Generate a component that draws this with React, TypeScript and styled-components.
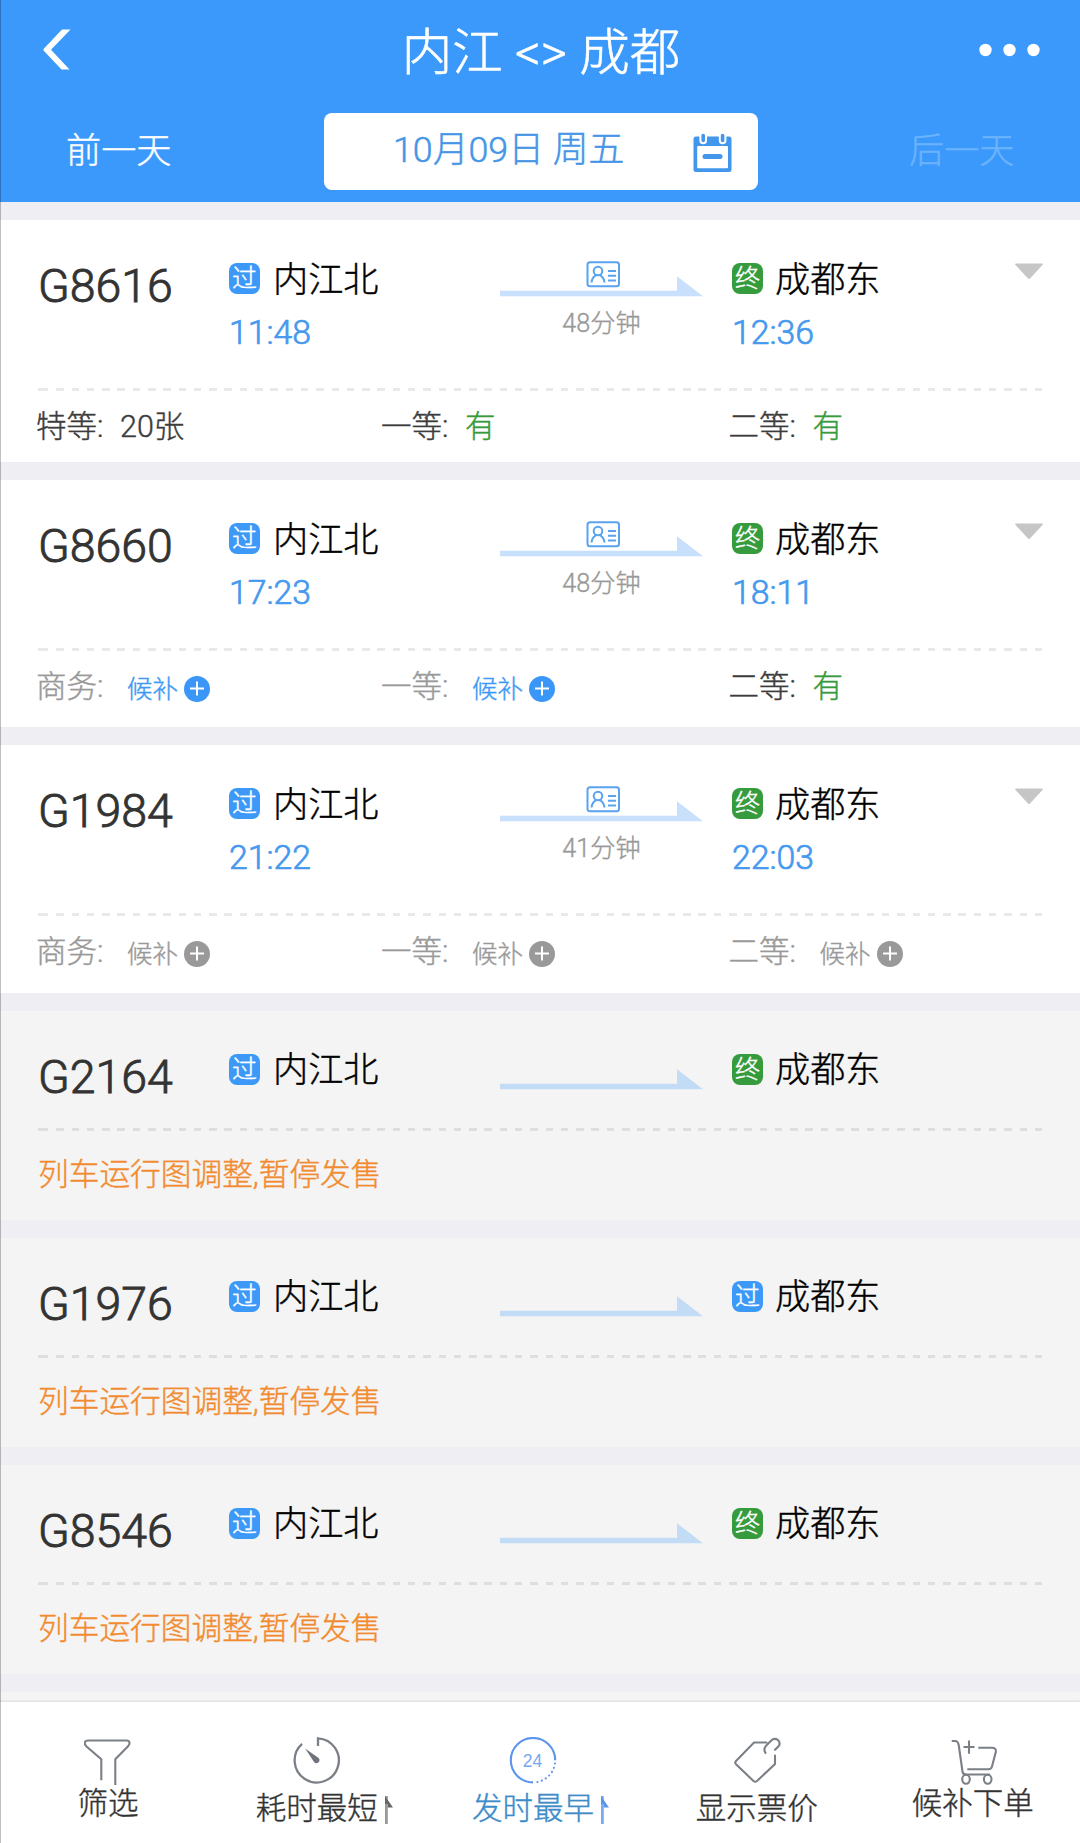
import React from "react";
import styled, { createGlobalStyle } from "styled-components";

const BLUE = "#3b99fc";
const GREEN = "#369b3d";

const GlobalStyle = createGlobalStyle`
  * { box-sizing: border-box; }
  body {
    margin: 0;
    background: #efeef3;
    font-family: Roboto, "Noto Sans CJK SC", sans-serif;
    font-weight: 300;
    -webkit-text-stroke-width: 0.4px;
  }
  svg { display: block; flex: none; }
`;

const Screen = styled.div`
  position: relative;
  display: flex;
  flex-direction: column;
  width: 1080px;
  height: 1843px;
  overflow: hidden;
  &::after {
    content: "";
    position: absolute;
    inset: 0 auto 0 0;
    width: 1px;
    background: rgba(0, 0, 0, 0.25);
  }
`;

/* ---------- header ---------- */

const Header = styled.header`
  flex: none;
  height: 201.5px;
  background: ${BLUE};
  color: #fff;
`;

const TitleRow = styled.div`
  display: grid;
  grid-template-columns: 200px 1fr 200px;
  height: 106px;
  padding: 0 40px 0 42px;
`;

const IconSlot = styled.div<{ $end?: boolean }>`
  display: flex;
  align-items: center;
  justify-content: ${(p) => (p.$end ? "flex-end" : "flex-start")};
  padding-bottom: 7px;
`;

const Title = styled.h1`
  margin: 0;
  font-size: 50.5px;
  font-weight: 300;
  line-height: 106px;
  text-align: center;
  white-space: nowrap;
  -webkit-text-stroke-width: 0.6px;
`;

const DateRow = styled.div`
  display: grid;
  grid-template-columns: 324px 434px 1fr;
  height: 90px;
  padding-top: 7px;
`;

const DayLink = styled.button<{ $next?: boolean }>`
  border: 0;
  padding: ${(p) => (p.$next ? "0 0 0 151px" : "0 0 0 66px")};
  background: none;
  color: ${(p) => (p.$next ? "#6cb3fd" : "#fff")};
  font: inherit;
  font-size: 35.2px;
  line-height: 77px;
  height: 77px;
  text-align: left;
`;

const DateBox = styled.div`
  display: flex;
  align-items: center;
  height: 77px;
  padding: 0 26px 0 69px;
  border-radius: 8px;
  background: #fff;
`;

const DateText = styled.span`
  flex: 1;
  color: #4695e6;
  font-size: 35.8px;
  line-height: 77px;
  padding-bottom: 2px;
  white-space: nowrap;
  -webkit-text-stroke-width: 0.5px;
`;

const CalendarSlot = styled.div`
  padding-top: 2px;
`;

/* ---------- train list ---------- */

const List = styled.main`
  display: flex;
  flex: 1;
  flex-direction: column;
  gap: 18px;
  min-height: 0;
  padding-top: 18.5px;
  overflow: hidden;
`;

const Card = styled.article<{ $off?: boolean; $h: number }>`
  flex: none;
  height: ${(p) => p.$h}px;
  background: ${(p) => (p.$off ? "#f4f4f4" : "#fff")};
`;

const Info = styled.div<{ $off?: boolean }>`
  display: grid;
  grid-template-columns: 191px 271px 232px 283px 28px;
  align-items: start;
  height: ${(p) => (p.$off ? 117 : 168)}px;
  padding: 43px 0 0 38px;
`;

const TrainNo = styled.div`
  font-size: 46.4px;
  line-height: 46px;
  color: #333;
  -webkit-text-stroke-width: 0.9px;
`;

const Station = styled.div<{ $end?: boolean }>`
  display: flex;
  align-items: center;
  height: 31px;
  gap: ${(p) => (p.$end ? 12 : 13)}px;
  font-size: 35.2px;
  line-height: 35px;
  color: #000;
  white-space: nowrap;
`;

const StationName = styled.span`
  padding-top: 3px;
`;

const Badge = styled.span<{ $end?: boolean }>`
  width: 31px;
  height: 31px;
  border-radius: 8px;
  background: ${(p) => (p.$end ? GREEN : "#3d99f8")};
  color: #fff;
  font-size: 25px;
  line-height: 31px;
  text-align: center;
`;

const Time = styled.div`
  margin-top: 19px;
  color: #4599ee;
  font-size: 33.8px;
  line-height: 40px;
  -webkit-text-stroke-width: 0.7px;
`;

const Route = styled.div<{ $off?: boolean }>`
  width: 203px;
  margin-top: ${(p) => (p.$off ? 0 : -2)}px;
`;

const Duration = styled.div`
  margin-top: 10px;
  color: #999;
  font-size: 25.2px;
  line-height: 34px;
  text-align: center;
`;

const Divider = styled.div<{ $off?: boolean }>`
  --dash: ${(p) => (p.$off ? "#dedede" : "#e9e9e9")};
  display: flex;
  height: 3px;
  margin: 0 37px 0 38px;
  &::before {
    content: "";
    width: 3.2px;
    background: var(--dash);
  }
  &::after {
    content: "";
    flex: 1;
    background: repeating-linear-gradient(90deg, var(--dash) 0 7.5px, transparent 7.5px 15.29px);
  }
`;

const Seats = styled.div`
  display: grid;
  grid-template-columns: 345px 347.5px 1fr;
  padding: 18px 0 0 36px;
  font-size: 30.5px;
  line-height: 36px;
`;

const Seat = styled.div<{ $dim?: boolean }>`
  display: flex;
  align-items: center;
  height: 36px;
  color: ${(p) => (p.$dim ? "#999" : "#3c3c3c")};
  white-space: nowrap;
`;

const SeatLabel = styled.span`
  width: 84px;
`;

const Available = styled.span`
  color: ${GREEN};
`;

const Waitlist = styled.span<{ $on?: boolean }>`
  display: flex;
  align-items: center;
  gap: 6px;
  padding: 4px 0 0 7px;
  color: ${(p) => (p.$on ? "#3c99f5" : "#999")};
  font-size: 25.5px;
  line-height: 32px;
`;

const Notice = styled.p`
  margin: 0;
  padding: 26px 0 0 38px;
  color: #f28b2f;
  font-size: 30.7px;
  line-height: 36px;
`;

/* ---------- bottom bar ---------- */

const TabBar = styled.nav`
  display: grid;
  grid-template-columns: repeat(5, 216.2px);
  flex: none;
  height: 141.5px;
  padding-top: 35px;
  background: #fff;
  box-shadow: 0 -1px 2px rgba(0, 0, 0, 0.1);
`;

const Tab = styled.div<{ $active?: boolean }>`
  display: flex;
  justify-content: center;
  align-items: flex-start;
  gap: 7px;
  color: ${(p) => (p.$active ? "#3d8cc8" : "#333")};
`;

const TabMain = styled.div<{ $gap: number }>`
  display: flex;
  flex-direction: column;
  align-items: center;
  gap: ${(p) => p.$gap}px;
  font-size: 30.5px;
  line-height: 36px;
  white-space: nowrap;
`;

const SortMark = styled.svg`
  margin-top: 59px;
`;

/* ---------- drawings ---------- */

const BackIcon = () => (
  <svg width="29" height="41" viewBox="0 0 29 41" fill="#fff">
    <path d="M20 .5H28.500L9 20.700 27.500 40.500H19.500L1.500 21.500V20Z" />
  </svg>
);

const MoreIcon = () => (
  <svg width="62" height="14" viewBox="0 0 62 14" fill="#fff">
    <circle cx="7.500" cy="7" r="6.200" />
    <circle cx="31.500" cy="7" r="6.200" />
    <circle cx="55.500" cy="7" r="6.200" />
  </svg>
);

const CalendarIcon = () => (
  <svg width="39" height="40" viewBox="0 0 39 40">
    <path d="M3 3.500H36Q38.500 3.500 38.500 6V36.500Q38.500 39 36 39H3Q.5 39 .5 36.500V6Q.5 3.500 3 3.500Z" fill="#4296ec" />
    <rect x="4.200" y="13" width="30.800" height="22.300" rx="1" fill="#fff" />
    <path d="M10.200 0V7.500M29.600 0V7.500" stroke="#fff" strokeWidth="7.600" strokeLinecap="round" />
    <path d="M10.200 2.500V7.500M29.600 2.500V7.500" stroke="#4296ec" strokeWidth="3.600" strokeLinecap="round" />
    <path d="M12 23.400H27" stroke="#4296ec" strokeWidth="5" strokeLinecap="round" />
  </svg>
);

const RouteArrow = ({ idCard }: { idCard: boolean }) => (
  <svg width="203" height="36" viewBox="0 0 203 36">
    <path d="M0 29.700H177V15.300L203 35.200H0Z" fill={idCard ? "#c8e0fb" : "#c3dcf6"} />
    {idCard && (
      <g fill="none" stroke="#5aa3ee" strokeWidth="2">
        <rect x="87.500" y="1.200" width="31.500" height="24" rx="2.500" />
        <ellipse cx="98" cy="10" rx="4.300" ry="4.300" />
        <path d="M91.500 21.500C92 17 94.500 14.800 96.500 13.800M99.500 13.800C101.500 14.800 104 17 104.500 21.500M108 10H116M108 14.800H116M108 19.500H116" />
      </g>
    )}
  </svg>
);

const Caret = () => (
  <svg width="28" height="17" viewBox="0 0 28 17">
    <path d="M1 .5H27Q28.500 .5 27.500 2L15 15.500Q14 16.500 13 15.500L.5 2Q-.5 .5 1 .5Z" fill="#c6c6c6" />
  </svg>
);

const PlusDot = ({ on }: { on: boolean }) => (
  <svg width="26" height="26" viewBox="0 0 26 26">
    <circle cx="13" cy="13" r="13" fill={on ? "#3b97f7" : "#999"} />
    <path d="M13 5.500V19.500M6 12.500H20" stroke="#fff" strokeWidth="2" />
  </svg>
);

const tabSvg = { width: 48, height: 48, viewBox: "0 0 48 48", fill: "none", stroke: "#7b8087", strokeWidth: 2.1 };

const FunnelIcon = () => (
  <svg {...tabSvg}>
    <path d="M17.300 43.300V22.300L2.500 9.500C-.5 6.500 .5 3.500 4 3.500H42.500C46 3.500 46.500 6.500 43.800 9.500L31.300 22.300V48" />
  </svg>
);

const ClockIcon = () => (
  <svg {...tabSvg} viewBox="0.7 0 48 48">
    <path d="M25.700 9V1.300A22.100 22.100 0 1 1 9.800 6.800" strokeWidth="2.300" />
    <path d="M12.800 11.500L26.300 20.900A3.100 3.100 0 1 1 21.400 24.600Z" fill="#6f747b" stroke="none" />
  </svg>
);

const Num24 = styled.text`
  font-family: "Liberation Sans", sans-serif;
  font-size: 17.5px;
  font-weight: 400;
  -webkit-text-stroke-width: 0;
`;

const DayIcon = () => (
  <svg {...tabSvg} stroke="#5b95ec">
    <path d="M46.200 23.200A22.200 22.200 0 1 0 24 45.400" strokeWidth="2.100" />
    <path d="M46 26.500A22.200 22.200 0 0 1 25.500 45.400" strokeDasharray="0 4.500" strokeLinecap="round" strokeWidth="2.200" />
    <Num24 x="23.500" y="29.500" textAnchor="middle" fill="#78a9f0" stroke="none">24</Num24>
  </svg>
);

const TagIcon = () => (
  <svg {...tabSvg} strokeLinecap="round">
    <path d="M33.500 5.500H21L3 24Q1.500 25.600 3 27.200L20.500 44Q22.200 45.500 24 44L42 27V18.500" />
    <path d="M32.500 15.800Q29.800 12 33.500 8.300L38.500 3.300Q41.500 .5 45 3Q48 6.300 45.500 9.300L42 12.800" />
  </svg>
);

const CartIcon = () => (
  <svg {...tabSvg}>
    <path d="M2.700 4H6Q9 4 9.700 8L13.500 34.500Q14 37.500 17 37.500H41" />
    <path d="M29.300 10.800H43Q47.500 10.800 46.800 15L43 29.500Q42.300 32.200 39.500 32.200H18.300M20 3.500V16.700M14.500 10H25.500" />
    <ellipse cx="17" cy="42.300" rx="3.800" ry="4.500" />
    <ellipse cx="38.700" cy="42.300" rx="3.800" ry="4.500" />
  </svg>
);

const SortArrow = ({ color, head }: { color: string; head: string }) => (
  <SortMark width="8" height="28" viewBox="0 0 8 28">
    <path d="M0 0H2.800V28H0Z" fill={color} />
    <path d="M0 0L8 11.500H2.800V8H0Z" fill={head} />
  </SortMark>
);

/* ---------- data ---------- */

type SeatInfo = { label: string; value?: string; wait?: "on" | "off" };
type Train = { no: string; end: boolean; h: number; dep?: string; arr?: string; mins?: string; seats?: SeatInfo[] };

const trains: Train[] = [
  {
    no: "G8616", end: true, h: 242, dep: "11:48", arr: "12:36", mins: "48分钟",
    seats: [{ label: "特等:", value: "20张" }, { label: "一等:", value: "有" }, { label: "二等:", value: "有" }],
  },
  {
    no: "G8660", end: true, h: 247, dep: "17:23", arr: "18:11", mins: "48分钟",
    seats: [{ label: "商务:", wait: "on" }, { label: "一等:", wait: "on" }, { label: "二等:", value: "有" }],
  },
  {
    no: "G1984", end: true, h: 247.5, dep: "21:22", arr: "22:03", mins: "41分钟",
    seats: [{ label: "商务:", wait: "off" }, { label: "一等:", wait: "off" }, { label: "二等:", wait: "off" }],
  },
  { no: "G2164", end: true, h: 209 },
  { no: "G1976", end: false, h: 209 },
  { no: "G8546", end: true, h: 209 },
];

const StationCell = ({ name, end, arrival, time }: { name: string; end?: boolean; arrival?: boolean; time?: string }) => (
  <div>
    <Station $end={arrival}>
      <Badge $end={end}>{end ? "终" : "过"}</Badge>
      <StationName>{name}</StationName>
    </Station>
    {time && <Time>{time}</Time>}
  </div>
);

const TrainCard = ({ train }: { train: Train }) => {
  const off = !train.seats;
  return (
    <Card $off={off} $h={train.h}>
      <Info $off={off}>
        <TrainNo>{train.no}</TrainNo>
        <StationCell name="内江北" time={train.dep} />
        <Route $off={off}>
          <RouteArrow idCard={!off} />
          {train.mins && <Duration>{train.mins}</Duration>}
        </Route>
        <StationCell name="成都东" end={train.end} arrival time={train.arr} />
        {!off && <Caret />}
      </Info>
      <Divider $off={off} />
      {train.seats ? (
        <Seats>
          {train.seats.map((s) => (
            <Seat key={s.label} $dim={!!s.wait}>
              <SeatLabel>{s.label}</SeatLabel>
              {s.wait && (
                <Waitlist $on={s.wait === "on"}>
                  候补
                  <PlusDot on={s.wait === "on"} />
                </Waitlist>
              )}
              {s.value === "有" ? <Available>有</Available> : s.value}
            </Seat>
          ))}
        </Seats>
      ) : (
        <Notice>列车运行图调整,暂停发售</Notice>
      )}
    </Card>
  );
};

export default function App() {
  return (
    <Screen>
      <GlobalStyle />
      <Header>
        <TitleRow>
          <IconSlot><BackIcon /></IconSlot>
          <Title>内江 &lt;&gt; 成都</Title>
          <IconSlot $end><MoreIcon /></IconSlot>
        </TitleRow>
        <DateRow>
          <DayLink>前一天</DayLink>
          <DateBox>
            <DateText>10月09日 周五</DateText>
            <CalendarSlot><CalendarIcon /></CalendarSlot>
          </DateBox>
          <DayLink $next>后一天</DayLink>
        </DateRow>
      </Header>
      <List>
        {trains.map((t) => <TrainCard key={t.no} train={t} />)}
        <Card $off $h={209} />
      </List>
      <TabBar>
        <Tab><TabMain $gap={1}><FunnelIcon />筛选</TabMain></Tab>
        <Tab>
          <TabMain $gap={6}><ClockIcon />耗时最短</TabMain>
          <SortArrow color="#999" head="#666" />
        </Tab>
        <Tab $active>
          <TabMain $gap={6}><DayIcon />发时最早</TabMain>
          <SortArrow color="#78aaf3" head="#5b95ec" />
        </Tab>
        <Tab><TabMain $gap={6}><TagIcon />显示票价</TabMain></Tab>
        <Tab><TabMain $gap={1}><CartIcon />候补下单</TabMain></Tab>
      </TabBar>
    </Screen>
  );
}
